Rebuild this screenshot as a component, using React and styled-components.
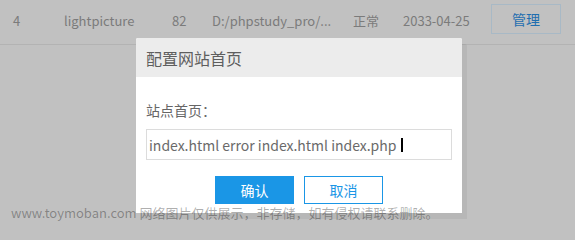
import React from 'react'
import styled, { createGlobalStyle } from 'styled-components'

const GlobalStyle = createGlobalStyle`
    html, body {
        margin: 0;
        padding: 0;
        background: #c1c1c1;
        font-family: "Noto Sans CJK SC", "Noto Sans", sans-serif;
    }
`

const Page = styled.div`
    position: relative;
    width: 575px;
    height: 224px;
    overflow: hidden;
    background: #c1c1c1;
`

const Row = styled.div`
    display: grid;
    grid-template-columns: 51px 108px 40px 141px 50px 88px 70px;
    align-items: center;
    height: 45px;
    padding-left: 13px;
    border-bottom: 1px solid #b3b3b3;
    box-sizing: border-box;
    font-size: 13px;
    color: #7b7b7b;
`

const Cell = styled.div`
    white-space: nowrap;
    margin-top: -3px;
`

const ManageButton = styled.button`
    width: 70px;
    height: 30px;
    margin-top: -6px;
    border: 1px solid #a8b9c6;
    background: transparent;
    color: #1f6eb0;
    font-family: inherit;
    font-size: 14px;
    padding: 0;
`

const Dialog = styled.div`
    position: absolute;
    left: 136px;
    top: 38px;
    width: 326px;
    background: #fff;
    border-radius: 2px 2px 0 0;
    box-shadow: 5px 6px 0 rgba(0, 0, 0, 0.05);
`

const DialogHeader = styled.div`
    height: 39px;
    display: flex;
    align-items: center;
    padding-left: 10px;
    background: #ececec;
    border-radius: 2px 2px 0 0;
    font-size: 16px;
    color: #5e5e5e;
`

const DialogBody = styled.div`
    padding: 23px 10px 9px;
`

const Label = styled.div`
    font-size: 14px;
    line-height: 20px;
    color: #666;
    margin-bottom: 9px;
`

const FakeInput = styled.div`
    height: 31px;
    box-sizing: border-box;
    border: 1px solid #dcdcdc;
    display: flex;
    align-items: center;
    padding-left: 2px;
    font-size: 14px;
    color: #6a6a6a;
`

const Caret = styled.span`
    display: inline-block;
    width: 2px;
    height: 14px;
    margin-left: 5px;
    background: #000;
`

const Actions = styled.div`
    display: flex;
    justify-content: center;
    gap: 10px;
    margin-top: 16px;
`

const ActionButton = styled.button`
    width: 79px;
    height: 28px;
    box-sizing: border-box;
    padding: 0;
    font-family: inherit;
    font-size: 14px;
    border: 1px solid #1a96e6;
    background: ${props => (props.$primary ? '#1a96e6' : '#fff')};
    color: ${props => (props.$primary ? '#fff' : '#1a96e6')};
`

const Watermark = styled.div`
    position: absolute;
    left: 11px;
    top: 204px;
    font-size: 13px;
    line-height: 18px;
    color: rgba(0, 0, 0, 0.32);
    white-space: nowrap;
`

const App = () => (
    <Page>
        <GlobalStyle />
        <Row>
            <Cell>4</Cell>
            <Cell>lightpicture</Cell>
            <Cell>82</Cell>
            <Cell>D:/phpstudy_pro/...</Cell>
            <Cell>正常</Cell>
            <Cell>2033-04-25</Cell>
            <ManageButton>管理</ManageButton>
        </Row>
        <Dialog>
            <DialogHeader>配置网站首页</DialogHeader>
            <DialogBody>
                <Label>站点首页：</Label>
                <FakeInput>
                    index.html error index.html index.php
                    <Caret />
                </FakeInput>
                <Actions>
                    <ActionButton $primary>确认</ActionButton>
                    <ActionButton>取消</ActionButton>
                </Actions>
            </DialogBody>
        </Dialog>
        <Watermark>www.toymoban.com 网络图片仅供展示，非存储，如有侵权请联系删除。</Watermark>
    </Page>
)

export default App
